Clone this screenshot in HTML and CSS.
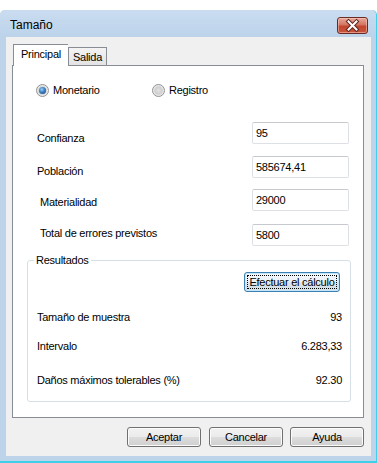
FILE: index.html
```html
<!DOCTYPE html>
<html lang="es">
<head>
<meta charset="utf-8">
<title>Tamaño</title>
<link rel="stylesheet" href="styles.css">
</head>
<body>
<div class="window">
  <div class="titlebar">
    <span class="title">Tamaño</span>
    <button class="close" aria-label="Cerrar">
      <svg width="31" height="17" viewBox="0 0 31 17">
        <path d="M11.5 4.5 L19.5 12.5 M19.5 4.5 L11.5 12.5" stroke="#5b2620" stroke-width="4" stroke-linecap="square"/>
        <path d="M11.5 4.5 L19.5 12.5 M19.5 4.5 L11.5 12.5" stroke="#ffffff" stroke-width="2" stroke-linecap="square"/>
      </svg>
    </button>
  </div>
  <div class="client">
    <div class="tabs">
      <div class="tab selected">Principal</div>
      <div class="tab">Salida</div>
    </div>
    <div class="panel">
      <div class="radios">
        <label class="radio-item first"><span class="radio checked"></span>Monetario</label>
        <label class="radio-item"><span class="radio"></span>Registro</label>
      </div>
      <div class="field f1"><span class="lbl">Confianza</span><div class="input">95</div></div>
      <div class="field f2"><span class="lbl">Población</span><div class="input">585674,41</div></div>
      <div class="field f3"><span class="lbl">Materialidad</span><div class="input">29000</div></div>
      <div class="field f4"><span class="lbl">Total de errores previstos</span><div class="input">5800</div></div>
      <div class="group">
        <span class="group-title">Resultados</span>
        <div class="calc-row"><button class="btn calc">Efectuar el cálculo</button></div>
        <div class="res r1"><span>Tamaño de muestra</span><span>93</span></div>
        <div class="res r2"><span>Intervalo</span><span>6.283,33</span></div>
        <div class="res r3"><span>Daños máximos tolerables (%)</span><span>92.30</span></div>
      </div>
    </div>
    <div class="buttons">
      <button class="btn">Aceptar</button>
      <button class="btn">Cancelar</button>
      <button class="btn">Ayuda</button>
    </div>
  </div>
</div>
</body>
</html>
```
FILE: styles.css
```css
html, body {
  margin: 0;
  padding: 0;
  background: #ffffff;
}
body {
  width: 377px;
  height: 463px;
  overflow: hidden;
  font-family: "Liberation Sans", Arial, sans-serif;
  font-size: 11px;
  letter-spacing: -0.25px;
  color: #000;
}
.window {
  box-sizing: border-box;
  margin-top: 10px;
  width: 377px;
  height: 453px;
  padding: 0 5px 5px 6px;
  background: #bcd3ea;
  border-right: 1px solid #3fcfe9;
  border-bottom: 2px solid #3fcfe9;
  border-radius: 5px 5px 0 0;
  display: flex;
  flex-direction: column;
}
.titlebar {
  height: 27px;
  display: flex;
  justify-content: space-between;
  align-items: flex-start;
  margin-left: -6px;
  margin-right: -5px;
  padding: 0 8px 0 10px;
  background: linear-gradient(#cadcf0, #bcd3ea);
  border-radius: 5px 5px 0 0;
}
.title {
  font-size: 12px;
  letter-spacing: 0;
  line-height: 14px;
  margin-top: 8px;
}
.close {
  margin-top: 7px;
  width: 31px;
  height: 17px;
  padding: 0;
  border: 1px solid #6b2a22;
  border-radius: 3px;
  background: linear-gradient(#e7a99c 0%, #d47561 45%, #c2462f 55%, #c9543c 100%);
  box-shadow: inset 0 0 0 1px rgba(255, 210, 200, 0.5);
  display: flex;
  align-items: center;
  justify-content: center;
  box-sizing: border-box;
}
.close svg {
  display: block;
  flex: none;
}
.client {
  flex: 1;
  background: #f0f0f0;
  padding: 7px 7px 0 6px;
  display: flex;
  flex-direction: column;
}
.tabs {
  height: 21px;
  display: flex;
  align-items: flex-end;
  padding-left: 1px;
  position: relative;
  z-index: 1;
}
.tab {
  box-sizing: border-box;
  height: 18px;
  width: 39px;
  border: 1px solid #898c95;
  border-bottom: none;
  background: linear-gradient(#f3f3f3, #e3e3e3);
  line-height: 17px;
  text-align: center;
  padding-top: 1px;
}
.tab.selected {
  height: 22px;
  width: 55px;
  margin-bottom: -1px;
  background: #ffffff;
  border-right: none;
  line-height: 18px;
  padding-top: 0;
}
.panel {
  box-sizing: border-box;
  height: 353px;
  background: #ffffff;
  border: 1px solid #898c95;
  display: flex;
  flex-direction: column;
}
.radios {
  display: flex;
  align-items: center;
  margin-top: 18px;
  padding-left: 23px;
  height: 13px;
}
.radio-item {
  display: flex;
  align-items: center;
  gap: 4px;
  line-height: 13px;
}
.radio-item.first {
  width: 116px;
}
.radio {
  box-sizing: border-box;
  width: 13px;
  height: 13px;
  border-radius: 50%;
  border: 1px solid #8f9193;
  background: radial-gradient(circle at 50% 50%, #e2e2e2 0%, #cfcfcf 45%, #f4f4f4 75%);
  display: flex;
  align-items: center;
  justify-content: center;
}
.radio.checked::after {
  content: "";
  width: 7px;
  height: 7px;
  border-radius: 50%;
  background: radial-gradient(circle at 40% 35%, #9ed0f5 0%, #3a7fc4 45%, #173f78 100%);
}
.field {
  display: flex;
  justify-content: space-between;
  align-items: flex-start;
  height: 22px;
  padding-right: 14px;
}
.field .lbl {
  line-height: 13px;
}
.f1 { margin-top: 25px; padding-left: 24px; }
.f1 .lbl { padding-top: 10px; }
.f2 { margin-top: 12px; padding-left: 24px; }
.f2 .lbl { padding-top: 9px; }
.f3 { margin-top: 11px; padding-left: 27px; }
.f3 .lbl { padding-top: 7px; }
.f4 { margin-top: 13px; padding-left: 27px; }
.f4 .lbl { padding-top: 3px; }
.input {
  box-sizing: border-box;
  width: 97px;
  height: 22px;
  border: 1px solid #dde1e6;
  border-top-color: #c6cacf;
  border-radius: 2px;
  padding: 2px 3px 0;
  line-height: 16px;
  background: #fff;
}
.group {
  position: relative;
  box-sizing: border-box;
  margin: 14px 12px 0 14px;
  height: 142px;
  border: 1px solid #d5dfe5;
  border-radius: 3px;
  padding: 11px 8px 0 9px;
}
.group-title {
  position: absolute;
  top: -7px;
  left: 6px;
  padding: 0 2px;
  background: #fff;
  line-height: 13px;
}
.calc-row {
  display: flex;
  justify-content: flex-end;
  padding-right: 2px;
}
.btn {
  box-sizing: border-box;
  width: 74px;
  height: 20px;
  padding: 0;
  font-family: inherit;
  font-size: 11px;
  letter-spacing: -0.25px;
  color: #000;
  border: 1px solid #707070;
  border-radius: 3px;
  background: linear-gradient(#f2f2f2 0%, #ebebeb 50%, #dddddd 51%, #cfcfcf 100%);
  box-shadow: inset 0 0 0 1px #fbfbfb;
  line-height: 17px;
  text-align: center;
}
.btn.calc {
  position: relative;
  width: 96px;
  border-color: #3c7fb1;
  box-shadow: inset 0 0 0 1px #c4e6f9;
  background: linear-gradient(#f4f9fc 0%, #eaf1f6 50%, #dce6ee 51%, #d2dde6 100%);
}
.btn.calc::after {
  content: "";
  position: absolute;
  inset: 2px;
  border: 1px dotted #000;
}
.res {
  display: flex;
  justify-content: space-between;
  line-height: 13px;
}
.r1 { margin-top: 19px; }
.r2 { margin-top: 16px; }
.r3 { margin-top: 21px; }
.buttons {
  display: flex;
  justify-content: flex-end;
  gap: 8px;
  margin-top: 9px;
  padding-right: 0;
}
.buttons .btn:nth-child(2) {
  margin-right: -1px;
}
```
